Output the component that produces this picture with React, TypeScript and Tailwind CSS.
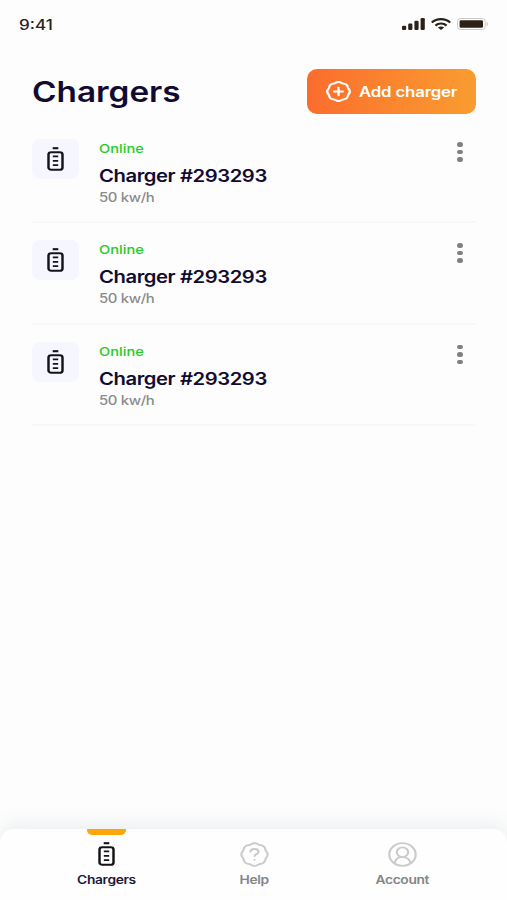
import { ReactNode } from "react";
import clsx from "clsx";

interface Charger {
  id: number;
  name: string;
  status: string;
  power: string;
}

const chargers: Charger[] = [
  { id: 1, name: "Charger #293293", status: "Online", power: "50 kw/h" },
  { id: 2, name: "Charger #293293", status: "Online", power: "50 kw/h" },
  { id: 3, name: "Charger #293293", status: "Online", power: "50 kw/h" },
];

// eight lobed badge outline, starts with a lobe at the top
const badgePath = (() => {
  const points: string[] = [];
  for (let i = 0; i < 96; i++) {
    const angle = (i / 96) * Math.PI * 2;
    const r = 10.5 + 0.4 * Math.cos(angle * 8);
    const x = 12 + r * Math.sin(angle);
    const y = 12 - r * Math.cos(angle);
    points.push(`${x.toFixed(2)} ${y.toFixed(2)}`);
  }
  return `M${points.join("L")}Z`;
})();

const BadgeIcon = ({ className, children }: { className: string; children: ReactNode }) => (
  <svg
    viewBox="0 0 24 24"
    preserveAspectRatio="none"
    fill="none"
    stroke="currentColor"
    strokeLinecap="round"
    strokeLinejoin="round"
    className={className}
  >
    <path d={badgePath} />
    {children}
  </svg>
);

const ChargerIcon = ({ className }: { className: string }) => (
  <svg
    viewBox="0 0 18 24"
    preserveAspectRatio="none"
    fill="none"
    stroke="currentColor"
    strokeWidth="2.1"
    className={className}
  >
    <path d="M6.6 1.2h4.8" />
    <rect x="3" y="5.2" width="12" height="17.6" rx="2.4" />
    <path d="M6.7 9.4h4.6M6.7 13.8h4.6M6.7 18.2h4.6" strokeWidth="1.8" />
  </svg>
);

const AccountIcon = ({ className }: { className: string }) => (
  <svg
    viewBox="0 0 24 24"
    preserveAspectRatio="none"
    fill="none"
    stroke="currentColor"
    strokeWidth="1.8"
    strokeLinecap="round"
    className={className}
  >
    <circle cx="12" cy="12" r="10.9" />
    <circle cx="12" cy="9.8" r="4.7" />
    <path d="M5.4 20.4c.6-3.8 2.8-5.9 6.6-5.9s6 2.1 6.6 5.9" />
  </svg>
);

const StatusBar = () => (
  <div className="flex h-12 items-center justify-between pr-[18px] pl-[19px] text-[#2b2118]">
    <span className="origin-left scale-x-[1.22] text-[14px] font-medium">9:41</span>
    <div className="flex items-center">
      <svg viewBox="0 0 24 12" className="h-3 w-6" fill="currentColor">
        <rect x="0" y="7.8" width="4.2" height="4.2" rx="1.2" />
        <rect x="6.2" y="5.6" width="4.2" height="6.4" rx="1.2" />
        <rect x="12.4" y="2.8" width="4.2" height="9.2" rx="1.2" />
        <rect x="18.6" y="0" width="4.2" height="12" rx="1.2" />
      </svg>
      <svg viewBox="0 0 20 12" className="ml-[5px] h-3 w-5" fill="none" stroke="currentColor" strokeWidth="2.2">
        <path d="M.8 4.5c5-4.4 13.4-4.4 18.4 0" />
        <path d="M4.4 7.6c3-2.8 8.2-2.8 11.2 0" />
        <path d="M6.9 9.5c1.7-1.5 4.5-1.5 6.2 0L10 12Z" fill="currentColor" stroke="none" />
      </svg>
      <svg viewBox="0 0 32 12" className="ml-1.5 h-3 w-8">
        <rect x=".6" y=".5" width="27.6" height="11" rx="3" fill="none" stroke="#cfc8c2" />
        <rect x="2.6" y="2.3" width="23.4" height="7.4" rx="1.3" fill="currentColor" />
        <path d="M29.6 4v4c1.7-.6 1.7-3.4 0-4Z" fill="#c9c3bd" />
      </svg>
    </div>
  </div>
);

const ChargerRow = ({ charger }: { charger: Charger }) => (
  <li className="flex h-[101.3px] flex-col justify-between">
    <div className="flex items-start">
      <div className="flex h-10 w-[47px] items-center justify-center rounded-lg bg-[#f6f6ff]">
        <ChargerIcon className="h-6 w-[21px] text-[#141418]" />
      </div>
      <div className="ml-5 flex w-[200px] flex-col items-start pl-[0.4px] whitespace-nowrap">
        <span className="origin-left scale-x-[1.22] text-[12px] leading-5 font-medium text-[#25cb25]">
          {charger.status}
        </span>
        <span className="mt-[5px] origin-left scale-x-[1.19] text-[17px] leading-6 font-semibold tracking-[-0.35px] text-[#110b31]">
          {charger.name}
        </span>
        <span className="origin-left scale-x-[1.19] text-[12.5px] leading-5 font-medium tracking-[-0.3px] text-[#8b8b8b]">
          {charger.power}
        </span>
      </div>
      <button className="mt-[3px] mr-[13px] ml-auto flex flex-col gap-[3px]" aria-label="More">
        <span className="h-[4.5px] w-1.5 rounded-full bg-[#808083]" />
        <span className="h-[4.5px] w-1.5 rounded-full bg-[#808083]" />
        <span className="h-[4.5px] w-1.5 rounded-full bg-[#808083]" />
      </button>
    </div>
    <div className="mb-[17px] h-0.5 bg-[#f8f8f8]" />
  </li>
);

interface TabProps {
  label: string;
  icon: ReactNode;
  active?: boolean;
}

const Tab = ({ label, icon, active }: TabProps) => (
  <button
    className={clsx(
      "flex w-[148px] flex-col items-center",
      active ? "text-[#1d1838]" : "text-[#858585]"
    )}
  >
    <span className={clsx("h-1.5 w-[39px] rounded-b-[5px]", active && "bg-[#fca60c]")} />
    <span className="mt-[5px] flex h-7 items-center">{icon}</span>
    <span className="mt-1 scale-x-[1.2] text-[11.5px] leading-4 font-semibold tracking-[-0.3px]">
      {label}
    </span>
  </button>
);

const App = () => {
  return (
    <div className="flex h-[900px] w-[507px] flex-col overflow-hidden bg-[#fdfdfd] font-['Inter',sans-serif]">
      <StatusBar />
      <header className="mt-[21px] flex items-center justify-between pr-[31px] pl-8">
        <h1 className="origin-left scale-x-[1.19] text-[28px] font-semibold text-[#110b31]">
          Chargers
        </h1>
        <button className="flex h-[45px] w-[169px] items-center rounded-[10px] bg-linear-to-r from-[#fb6c2d] to-[#f99c30] pl-[19px] text-white">
          <BadgeIcon className="h-[21px] w-[25px] stroke-[2.2]">
            <path d="M12 7.8v8.4M7.8 12h8.4" />
          </BadgeIcon>
          <span className="ml-2 origin-left scale-x-[1.2] text-[14px] font-semibold tracking-[-0.15px] whitespace-nowrap">
            Add charger
          </span>
        </button>
      </header>
      <ul className="mt-[25px] flex flex-col pr-[31px] pl-8">
        {chargers.map((charger) => (
          <ChargerRow key={charger.id} charger={charger} />
        ))}
      </ul>
      <nav className="mt-auto flex h-[71px] justify-center rounded-t-[14px] bg-[#fefefe] pl-px shadow-[0_-4px_20px_rgba(70,90,110,0.1)]">
        <Tab label="Chargers" active icon={<ChargerIcon className="h-6 w-[21px] text-[#141418]" />} />
        <Tab
          label="Help"
          icon={
            <BadgeIcon className="h-[25px] w-[29px] stroke-[1.8] text-[#cbcbcb]">
              <path d="M8.6 9.2c.6-3.6 6.9-3.2 6.7.4-.1 2-3.1 2-3.2 3.8M12 17v.1" />
            </BadgeIcon>
          }
        />
        <Tab label="Account" icon={<AccountIcon className="h-[25px] w-[29px] text-[#cbcbcb]" />} />
      </nav>
    </div>
  );
};

export default App;
